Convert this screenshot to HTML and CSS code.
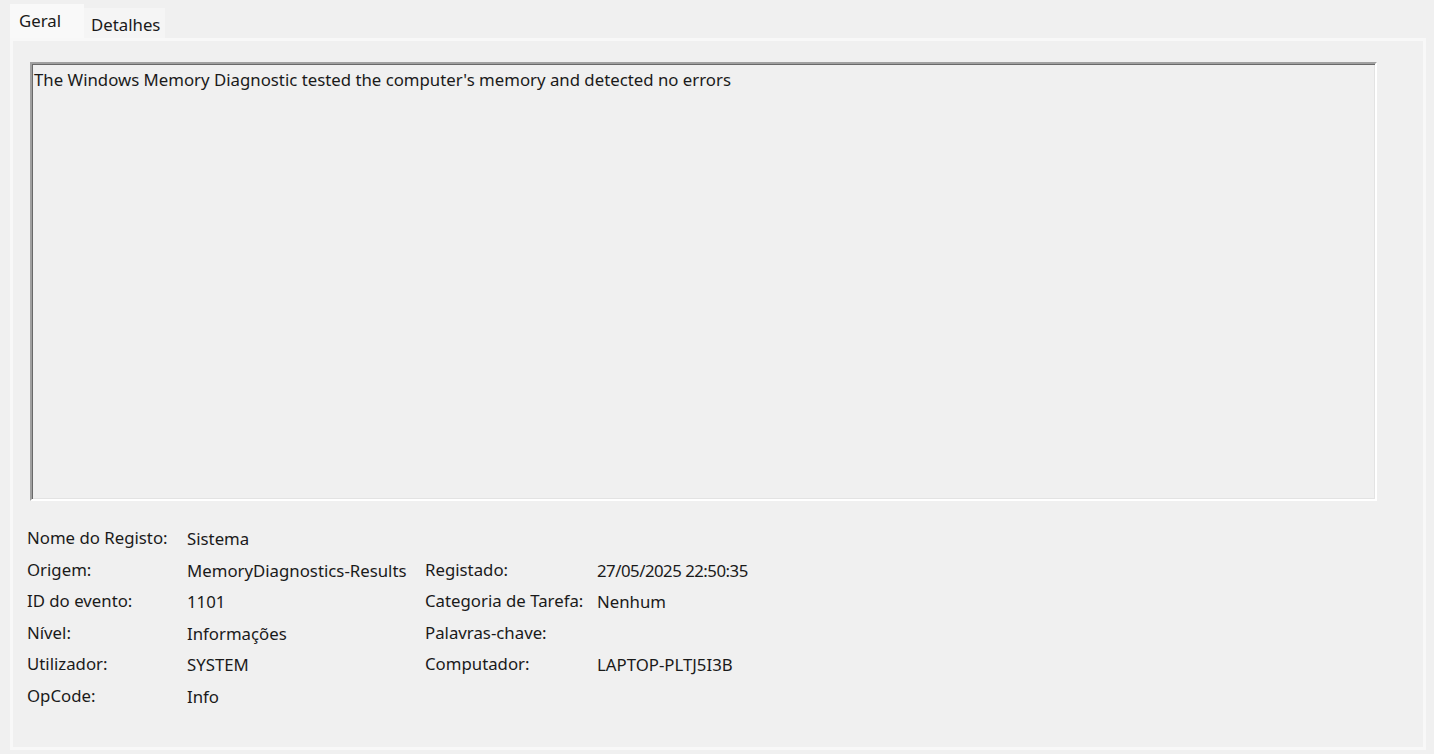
FILE: index.html
```html
<!DOCTYPE html>
<html lang="pt">
<head>
<meta charset="utf-8">
<title>Propriedades do Evento</title>
<link rel="stylesheet" href="styles.css">
</head>
<body>
<div class="window">
  <div class="tabs">
    <div class="tab active">Geral</div>
    <div class="tab">Detalhes</div>
  </div>
  <div class="panel">
    <div class="message">The Windows Memory Diagnostic tested the computer's memory and detected no errors</div>
    <div class="fields">
      <div class="lbl">Nome do Registo:</div><div class="val">Sistema</div><div class="lbl"></div><div class="val"></div>
      <div class="lbl">Origem:</div><div class="val">MemoryDiagnostics-Results</div><div class="lbl">Registado:</div><div class="val num">27/05/2025 22:50:35</div>
      <div class="lbl">ID do evento:</div><div class="val">1101</div><div class="lbl">Categoria de Tarefa:</div><div class="val">Nenhum</div>
      <div class="lbl">Nível:</div><div class="val">Informações</div><div class="lbl">Palavras-chave:</div><div class="val"></div>
      <div class="lbl">Utilizador:</div><div class="val">SYSTEM</div><div class="lbl">Computador:</div><div class="val">LAPTOP-PLTJ5I3B</div>
      <div class="lbl">OpCode:</div><div class="val">Info</div><div class="lbl"></div><div class="val"></div>
    </div>
  </div>
</div>
</body>
</html>
```
FILE: styles.css
```css
html, body {
  margin: 0;
  padding: 0;
  background: #f0f0f0;
  width: 1434px;
  height: 754px;
  overflow: hidden;
  font-family: "Noto Sans", "Open Sans", sans-serif;
  font-size: 16.8px;
  color: #1a1a1a;
}
.window {
  padding: 4px 8px 0 10px;
}
.tabs {
  display: flex;
  align-items: flex-end;
  height: 34px;
}
.tab {
  box-sizing: border-box;
  height: 30px;
  padding: 5px 0 0 7px;
  background: #f5f5f5;
  width: 81px;
  line-height: 24px;
}
.tab.active {
  height: 34px;
  width: 74px;
  padding: 5px 0 0 9px;
  background: #f9f9f9;
}
.panel {
  box-sizing: border-box;
  height: 712px;
  width: 1416px;
  border: 3px solid #f8f8f8;
  background: #f0f0f0;
  padding: 21px 46px 0 17px;
}
.message {
  box-sizing: border-box;
  height: 439px;
  border-style: solid;
  border-width: 2px;
  border-color: #a0a0a0 #ffffff #ffffff #a0a0a0;
  box-shadow: inset 1px 1px 0 #696969, inset -1px -1px 0 #e3e3e3;
  padding: 4px 2px;
  line-height: 24px;
}
.fields {
  display: grid;
  grid-template-columns: 160px 238px 172px auto;
  grid-auto-rows: 31.6px;
  margin-top: 25px;
  margin-left: -3px;
  line-height: 24px;
}
.val {
  padding-top: 1px;
}
.num {
  letter-spacing: -0.5px;
}
```
